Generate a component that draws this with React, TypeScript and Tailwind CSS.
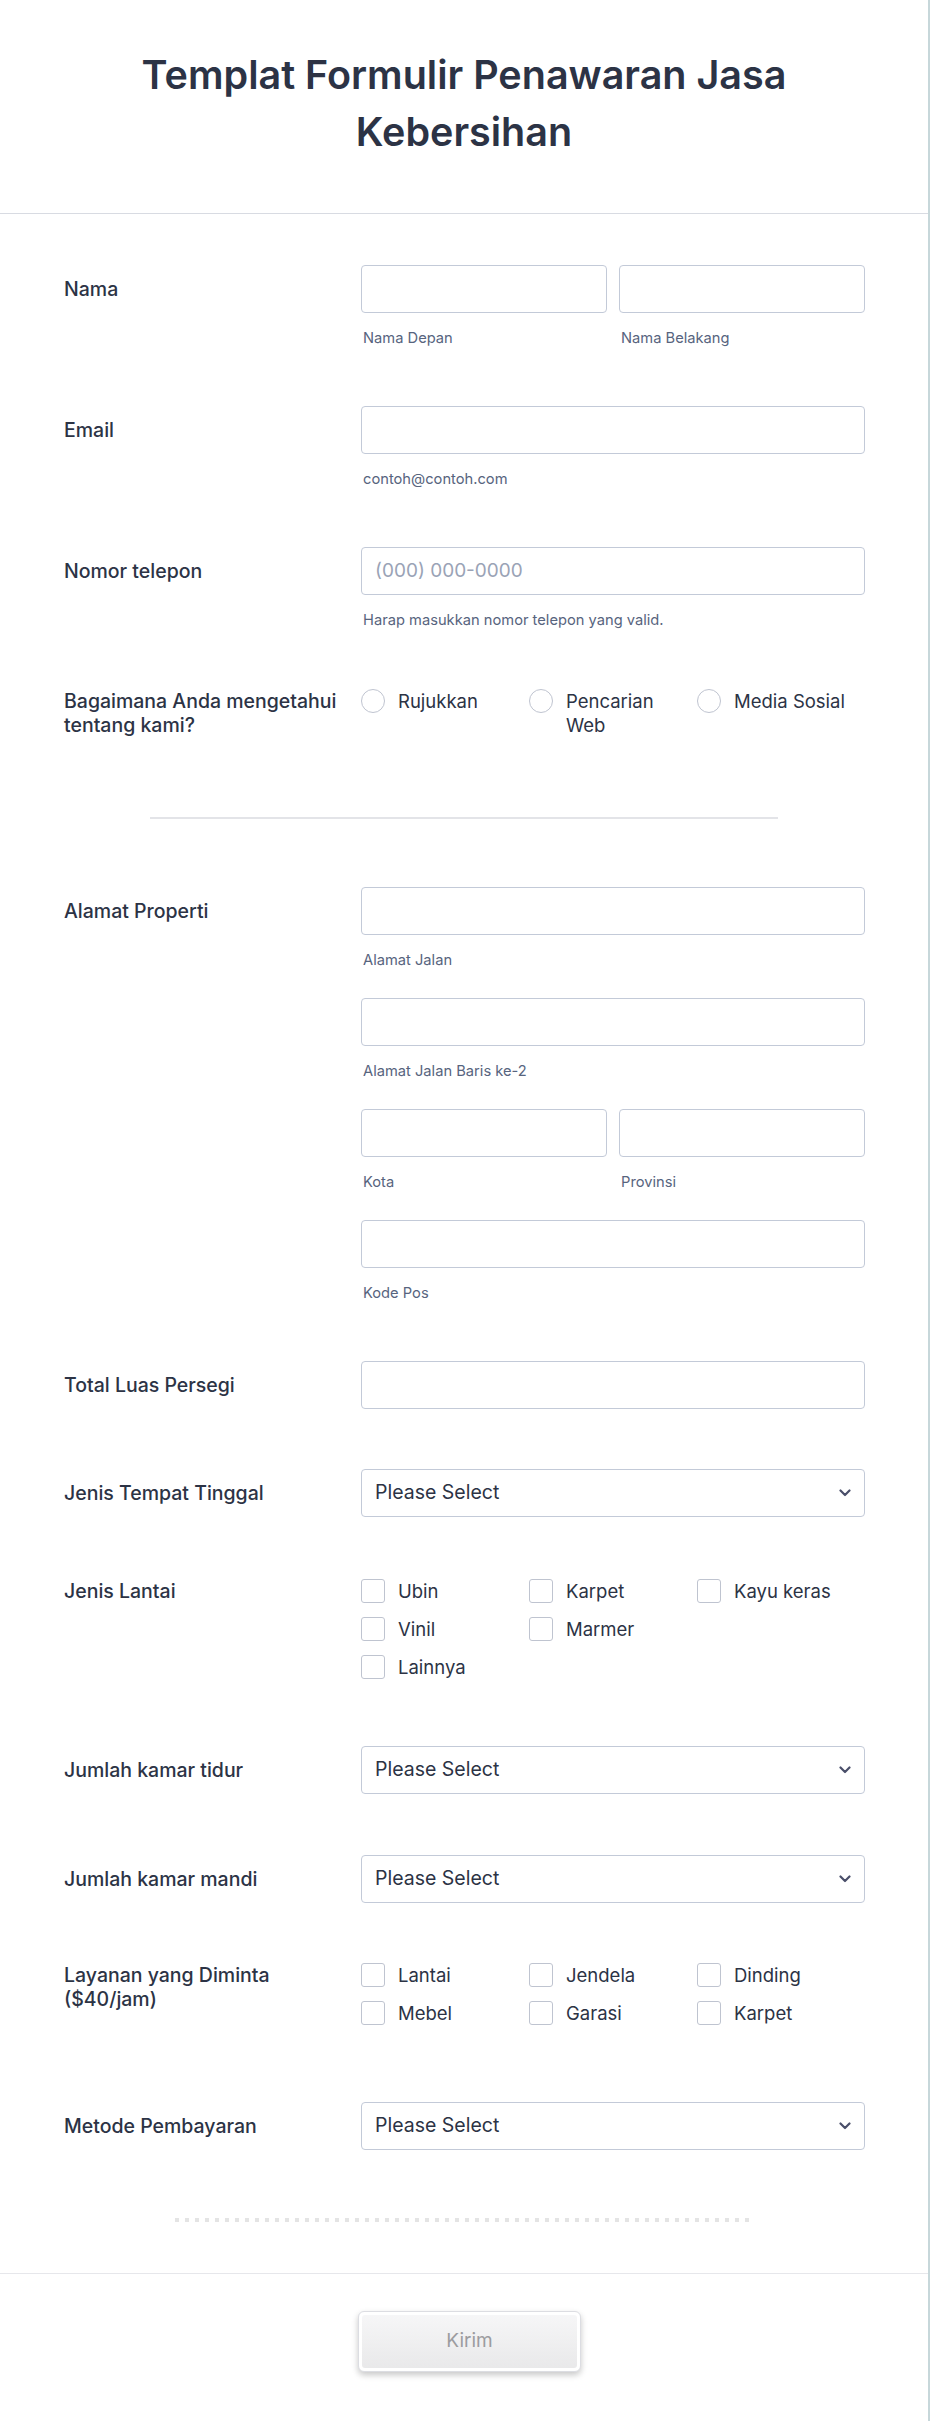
import React from "react";

const Chevron = () => (
  <svg width="12" height="8" viewBox="0 0 12 8" className="shrink-0">
    <path d="M1.5 1.5 L6 6 L10.5 1.5" fill="none" stroke="#4a4f6a" strokeWidth="2.2" strokeLinecap="round" strokeLinejoin="round" />
  </svg>
);

const Input = ({ placeholder, className = "" }: { placeholder?: string; className?: string }) => (
  <div className={`h-[48px] rounded-[4px] border border-[#c3cad8] bg-white flex items-center px-[13px] text-[19px] text-[#9aa3b6] ${className}`}>
    {placeholder}
  </div>
);

const Select = () => (
  <div className="h-[48px] w-[504px] rounded-[4px] border border-[#c3cad8] bg-white flex items-center justify-between pl-[13px] pr-[13px] text-[19.5px] text-[#2c3345]">
    <span>Please Select</span>
    <Chevron />
  </div>
);

const Sub = ({ children }: { children: React.ReactNode }) => (
  <div className="mt-[15px] h-[20px] leading-[20px] text-[14.7px] text-[#57647e] pl-[2px]">{children}</div>
);

const Label = ({ children, top = true }: { children: React.ReactNode; top?: boolean }) => (
  <div className={`w-[297px] shrink-0 pr-[12px] text-[19.5px] leading-[24px] font-medium text-[#2c3345] ${top ? "pt-[12px]" : ""}`}>
    {children}
  </div>
);

const Radio = ({ text }: { text: string }) => (
  <div className="flex items-start gap-[13px]">
    <div className="w-[24px] h-[24px] rounded-full border border-[#bfc4d0] bg-white shrink-0" />
    <span className="text-[18.5px] leading-[24px] text-[#2c3345] max-w-[118px]">{text}</span>
  </div>
);

const Check = ({ text }: { text: string }) => (
  <div className="flex items-start gap-[13px] h-[24px]">
    <div className="w-[24px] h-[24px] rounded-[3px] border border-[#bfc4d0] bg-white shrink-0" />
    <span className="text-[18.5px] leading-[24px] text-[#2c3345]">{text}</span>
  </div>
);

export default function App() {
  return (
    <div className="w-[930px] min-h-[2421px] bg-white border-r-2 border-[#c7d7da] font-['Inter','Noto_Sans',sans-serif] flex flex-col">
      {/* Header */}
      <div className="h-[214px] border-b border-[#d8dbe2] pt-[47px] px-[64px]">
        <h1 className="text-[39.5px] leading-[57px] font-semibold text-[#2c3345] text-center">
          Templat Formulir Penawaran Jasa Kebersihan
        </h1>
      </div>

      {/* Body */}
      <div className="pl-[64px] flex flex-col">
        {/* Nama */}
        <div className="flex mt-[51px]">
          <Label>Nama</Label>
          <div className="w-[504px] grid grid-cols-2 gap-x-[12px]">
            <div>
              <Input />
              <Sub>Nama Depan</Sub>
            </div>
            <div>
              <Input />
              <Sub>Nama Belakang</Sub>
            </div>
          </div>
        </div>

        {/* Email */}
        <div className="flex mt-[58px]">
          <Label>Email</Label>
          <div className="w-[504px]">
            <Input />
            <Sub>contoh@contoh.com</Sub>
          </div>
        </div>

        {/* Phone */}
        <div className="flex mt-[58px]">
          <Label>Nomor telepon</Label>
          <div className="w-[504px]">
            <Input placeholder="(000) 000-0000" />
            <Sub>Harap masukkan nomor telepon yang valid.</Sub>
          </div>
        </div>

        {/* Radio */}
        <div className="flex mt-[59px]">
          <Label top={false}>Bagaimana Anda mengetahui tentang kami?</Label>
          <div className="w-[504px] grid grid-cols-3">
            <Radio text="Rujukkan" />
            <Radio text="Pencarian Web" />
            <Radio text="Media Sosial" />
          </div>
        </div>
      </div>

      {/* Divider */}
      <div className="mt-[80px] flex justify-center">
        <div className="w-[628px] h-[2px] bg-[#e3e4e8]" />
      </div>

      <div className="pl-[64px] flex flex-col">
        {/* Alamat */}
        <div className="flex mt-[68px]">
          <Label>Alamat Properti</Label>
          <div className="w-[504px] flex flex-col">
            <Input />
            <Sub>Alamat Jalan</Sub>
            <Input className="mt-[28px]" />
            <Sub>Alamat Jalan Baris ke-2</Sub>
            <div className="mt-[28px] grid grid-cols-2 gap-x-[12px]">
              <div>
                <Input />
                <Sub>Kota</Sub>
              </div>
              <div>
                <Input />
                <Sub>Provinsi</Sub>
              </div>
            </div>
            <Input className="mt-[28px]" />
            <Sub>Kode Pos</Sub>
          </div>
        </div>

        {/* Total Luas */}
        <div className="flex mt-[58px]">
          <Label>Total Luas Persegi</Label>
          <div className="w-[504px]">
            <Input />
          </div>
        </div>

        {/* Jenis Tempat Tinggal */}
        <div className="flex mt-[60px]">
          <Label>Jenis Tempat Tinggal</Label>
          <Select />
        </div>

        {/* Jenis Lantai */}
        <div className="flex mt-[62px]">
          <Label top={false}>Jenis Lantai</Label>
          <div className="w-[504px] grid grid-cols-3 gap-y-[14px]">
            <Check text="Ubin" />
            <Check text="Karpet" />
            <Check text="Kayu keras" />
            <Check text="Vinil" />
            <Check text="Marmer" />
            <div />
            <Check text="Lainnya" />
          </div>
        </div>

        {/* Jumlah kamar tidur */}
        <div className="flex mt-[67px]">
          <Label>Jumlah kamar tidur</Label>
          <Select />
        </div>

        {/* Jumlah kamar mandi */}
        <div className="flex mt-[61px]">
          <Label>Jumlah kamar mandi</Label>
          <Select />
        </div>

        {/* Layanan */}
        <div className="flex mt-[60px]">
          <Label top={false}>Layanan yang Diminta ($40/jam)</Label>
          <div className="w-[504px] grid grid-cols-3 gap-y-[14px]">
            <Check text="Lantai" />
            <Check text="Jendela" />
            <Check text="Dinding" />
            <Check text="Mebel" />
            <Check text="Garasi" />
            <Check text="Karpet" />
          </div>
        </div>

        {/* Metode */}
        <div className="flex mt-[77px]">
          <Label>Metode Pembayaran</Label>
          <Select />
        </div>
      </div>

      {/* Dotted line */}
      <div className="mt-[68px] flex justify-center">
        <div className="w-[578px] h-[4px] bg-[linear-gradient(to_right,#e4e4e4_4px,transparent_4px)] bg-[length:10px_4px] bg-repeat-x" />
      </div>

      {/* Footer */}
      <div className="mt-[51px] border-t border-[#e6e7eb] flex-1 flex justify-center pt-[37px] pl-[11px]">
        <div className="w-[223px] h-[61px] rounded-[6px] bg-white p-[3px] border border-[#dcdde2] shadow-[0_3px_6px_rgba(0,0,0,0.22)]">
          <div className="w-full h-full rounded-[3px] bg-[linear-gradient(to_bottom,#f6f6f7,#e9e9ea)] flex items-center justify-center text-[19px] text-[#9c9c9f]">
            Kirim
          </div>
        </div>
      </div>
    </div>
  );
}
